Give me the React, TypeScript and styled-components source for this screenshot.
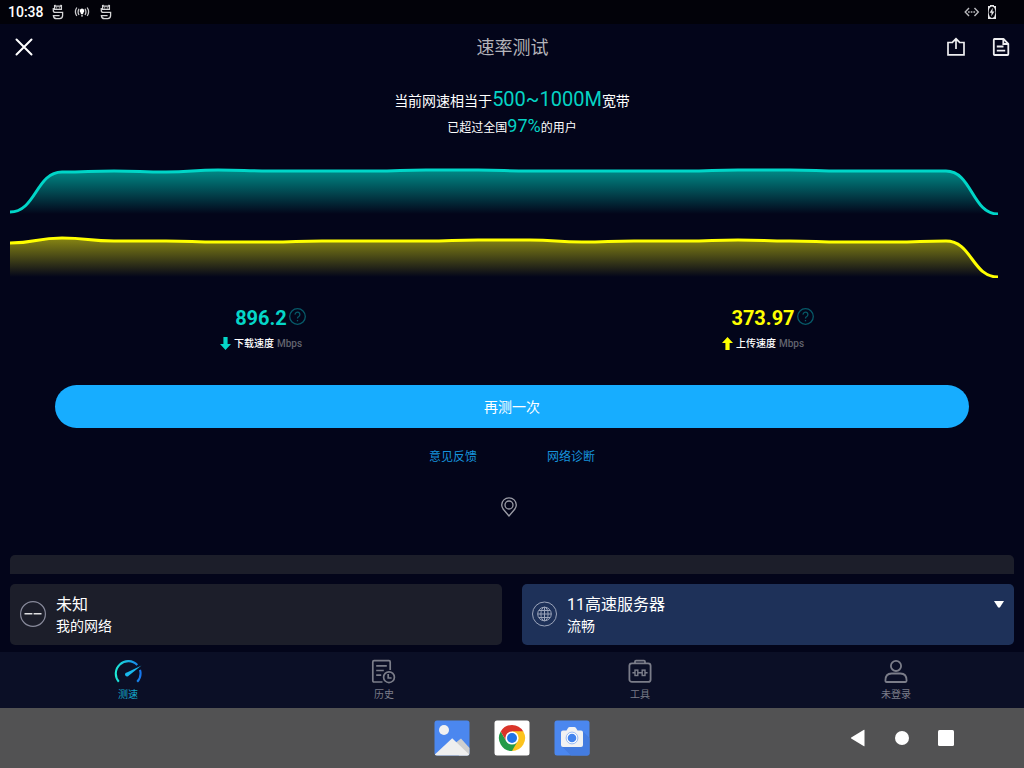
import React from "react";
import styled, { createGlobalStyle } from "styled-components";

const GlobalStyle = createGlobalStyle`
  *, *::before, *::after { box-sizing: border-box; }
  body {
    margin: 0;
    background: #03051a;
    color: #fff;
    font-family: Roboto, "Noto Sans CJK SC", sans-serif;
  }
  button {
    margin: 0;
    padding: 0;
    border: 0;
    background: none;
    color: inherit;
    font: inherit;
    cursor: pointer;
  }
  a { text-decoration: none; }
  h1, p { margin: 0; font-weight: 400; }
  svg { display: block; flex: none; }
`;

const Screen = styled.div`
  display: flex;
  flex-direction: column;
  min-height: 100vh;
`;

const StatusBar = styled.div`
  display: flex;
  align-items: center;
  justify-content: space-between;
  height: 24px;
  padding: 0 28px 0 8px;
  background: #020209;
`;

const StatusGroup = styled.div<{ $gap: number }>`
  display: flex;
  align-items: center;
  gap: ${(p) => p.$gap}px;
`;

const Clock = styled.time`
  font-size: 14px;
  font-weight: 500;
  line-height: 24px;
`;

const Header = styled.header`
  display: grid;
  grid-template-columns: 1fr auto 1fr;
  align-items: center;
  height: 46px;
  padding: 0 11px 0 12px;
`;

const Title = styled.h1`
  padding-top: 2px;
  color: #b4b4ba;
  font-size: 18px;
  line-height: 26px;
`;

const HeaderActions = styled.div`
  display: flex;
  justify-content: flex-end;
  gap: 21px;
`;

const IconButton = styled.button`
  display: grid;
  place-items: center;
  width: 24px;
  height: 24px;
`;

const Main = styled.main`
  display: flex;
  flex: 1;
  flex-direction: column;
  padding: 15px 10px 7px;
`;

const Summary = styled.section`
  display: flex;
  flex-direction: column;
  align-items: center;
`;

const SummaryLine = styled.p<{ $size: number }>`
  font-size: ${(p) => p.$size}px;
  line-height: 28px;
`;

const SummaryDetail = styled(SummaryLine)`
  line-height: 22px;
`;

const Highlight = styled.span<{ $size: number }>`
  color: #05d3c4;
  font-size: ${(p) => p.$size}px;
`;

const Charts = styled.section`
  display: flex;
  flex-direction: column;
  gap: 13px;
  margin-top: 26px;
`;

const ChartSvg = styled.svg`
  width: 100%;
  height: 50px;
`;

const Stats = styled.section`
  display: grid;
  grid-template-columns: 1fr 1fr;
  margin-top: 26px;
`;

const Stat = styled.div`
  display: flex;
  flex-direction: column;
  align-items: center;
`;

const StatValue = styled.div`
  display: grid;
  grid-template-columns: 1fr auto 1fr;
  align-items: center;
  gap: 2px;
  height: 28px;
`;

const StatNumber = styled.strong<{ $color: string }>`
  grid-column: 2;
  color: ${(p) => p.$color};
  font-size: 20px;
  font-weight: 700;
  line-height: 28px;
`;

const HelpButton = styled.button`
  display: grid;
  place-items: start center;
  width: 17px;
  height: 20px;
  color: #075a69;
`;

const StatLabel = styled.div`
  display: flex;
  align-items: center;
  gap: 3px;
  font-size: 10px;
  font-weight: 500;
  line-height: 24px;
`;

const Unit = styled.span`
  color: #62636e;
`;

const RetryButton = styled.button`
  height: 43px;
  margin: 29px 45px 0;
  border-radius: 22px;
  background: #17adff;
  font-size: 14px;
  line-height: 20px;
`;

const Links = styled.nav`
  display: flex;
  justify-content: center;
  gap: 70px;
  margin-top: 19px;
`;

const TextLink = styled.a`
  color: #1693dc;
  font-size: 12px;
  line-height: 20px;
`;

const Location = styled.div`
  display: flex;
  justify-content: center;
  margin-top: 30px;
  padding-right: 6px;
`;

const Banner = styled.div`
  height: 19px;
  margin-top: auto;
  border-radius: 5px 5px 0 0;
  background: #1c1e2a;
`;

const Cards = styled.section`
  display: grid;
  grid-template-columns: 1fr 1fr;
  gap: 20px;
  margin-top: 10px;
`;

const Card = styled.button<{ $active?: boolean }>`
  display: flex;
  align-items: center;
  gap: 10px;
  height: 61px;
  padding: 0 10px 1px;
  border-radius: 5px;
  background: ${(p) => (p.$active ? "#1e3159" : "#1c1e2a")};
  text-align: left;
`;

const CardText = styled.span`
  display: flex;
  flex: 1;
  flex-direction: column;
  padding-top: 2px;
`;

const CardTitle = styled.span`
  font-size: 16px;
  line-height: 22px;
`;

const CardNote = styled.span`
  font-size: 14px;
  line-height: 20px;
`;

const CardArrow = styled.span`
  align-self: flex-start;
  padding-top: 17px;
`;

const TabBar = styled.nav`
  display: grid;
  grid-template-columns: repeat(4, 1fr);
  height: 56px;
  background: #0b0f26;
`;

const Tab = styled.a<{ $active?: boolean }>`
  display: flex;
  flex-direction: column;
  align-items: center;
  padding-top: 5px;
  color: ${(p) => (p.$active ? "#13a5c9" : "#7b7d89")};
  font-size: 10px;
  line-height: 16px;
`;

const SystemBar = styled.footer`
  display: grid;
  grid-template-columns: 1fr auto 1fr;
  align-items: center;
  height: 60px;
  background: #525253;
`;

const Dock = styled.div`
  display: flex;
  grid-column: 2;
  gap: 24px;
`;

const AppButton = styled.button`
  width: 36px;
  height: 36px;
`;

const SystemKeys = styled.div`
  display: flex;
  justify-content: flex-end;
  gap: 20px;
  padding-right: 66px;
`;

const DebugIcon = () => (
  <svg width="12" height="16" viewBox="0 0 12 16" fill="none" stroke="#d6d6d8" strokeWidth="1.3">
    <path d="M2.6 .8 3.6 2.2H8.4L9.4 .8M2.6 1V5.4H9.4V1" />
    <path d="M4.2 3.8H5.2M6.8 3.8H7.8" />
    <path d="M1.3 4V6.4Q1.3 8.4 3.4 8.4H10.6V11.6Q10.6 14.6 7.6 14.6H4.4Q1.6 14.6 1.4 11.6H7.6" />
  </svg>
);

const BroadcastIcon = () => (
  <svg width="16" height="16" viewBox="0 0 16 16" fill="none" stroke="#c8c8cb" strokeWidth="1.3">
    <path d="M2.8 3.5Q0 8 2.8 12M5 4.8Q3.2 8 5 11M13.2 3.5Q16 8 13.2 12M11 4.8Q12.8 8 11 11" />
    <path fill="#fff" stroke="none" d="M8 4.6A2.4 2.4 0 0 1 9.2 9V10.2H6.8V9A2.4 2.4 0 0 1 8 4.6ZM7.2 11.2H8.8V12.6H7.2Z" />
  </svg>
);

const EthernetIcon = () => (
  <svg width="16" height="12" viewBox="0 0 16 12" fill="none" stroke="#b9b9bd" strokeWidth="1.4">
    <path d="M5 2 1.2 6 5 10M10.5 2 14.3 6 10.5 10" />
    <path d="M4 6H11.5" strokeDasharray="1.7 1" />
  </svg>
);

const BatteryIcon = () => (
  <svg width="8" height="14" viewBox="0 0 8 14">
    <path fill="#e6e6e8" d="M2 0H6V1H8V14H0V1H2Z" />
    <ellipse cx="4" cy="7.2" rx="3.4" ry="5.8" fill="#020209" />
    <path fill="#e6e6e8" d="M4.8 2.8 1.6 7.8H3.6L3.2 11.6 6.4 6.6H4.4Z" />
  </svg>
);

const CloseIcon = () => (
  <svg width="18" height="18" viewBox="0 0 18 18" stroke="#fff" strokeWidth="2" strokeLinecap="round">
    <path d="M1.5 1.5 16.5 16.5M16.5 1.5 1.5 16.5" />
  </svg>
);

const ShareIcon = () => (
  <svg width="20" height="20" viewBox="0 0 20 20" fill="none" stroke="#eeeef0" strokeWidth="1.7">
    <path d="M7 5.5H2V17.8H18V5.5H13M10 12V2M6.6 5.2 10 1.8 13.4 5.2" />
  </svg>
);

const DocumentIcon = () => (
  <svg width="18" height="20" viewBox="0 0 18 20" fill="none" stroke="#eeeef0" strokeWidth="1.8">
    <path strokeLinejoin="round" d="M2.3 2H11.5L16.3 6.8V17.2Q16.3 18 15.5 18H2.6Q1.8 18 1.8 17.2V2.8Q1.8 2 2.6 2Z" />
    <path d="M11.3 2V7H16.3M4.8 9.5H11.5M4.8 13.6H13.2" />
  </svg>
);

const HelpIcon = () => (
  <svg width="17" height="17" viewBox="0 0 17 17" fill="none" stroke="currentColor" strokeWidth="1.3">
    <circle cx="8.5" cy="8.5" r="7.8" />
    <path d="M6.1 6.6A2.4 2.4 0 1 1 9.8 8.5Q8.5 9.2 8.5 10.5" />
    <path d="M8.5 12V13.3" />
  </svg>
);

const DirectionIcon = ({ up, color }: { up?: boolean; color: string }) => (
  <svg width="11" height="14" viewBox="0 0 11 14" fill={color}>
    <path d={up ? "M5.5 0 11 6H7.6V13H3.4V6H0Z" : "M3.4 0H7.6V7H11L5.5 13 0 7H3.4Z"} />
  </svg>
);

const PinIcon = () => (
  <svg width="16" height="20" viewBox="0 0 16 20" fill="none" stroke="#9b9ca6" strokeWidth="1.3">
    <path d="M8 19 2.5 12.5Q.7 10.3.7 8A7.3 7.2 0 0 1 15.3 8Q15.3 10.3 13.5 12.5Z" />
    <circle cx="8" cy="8" r="4" />
  </svg>
);

const UnknownIcon = () => (
  <svg width="26" height="26" viewBox="0 0 26 26" fill="none">
    <circle cx="13" cy="13" r="12.4" stroke="#888a9b" strokeWidth="1.2" />
    <path d="M4.5 12.7H12.4M13.6 12.7H21.5" stroke="#e0e0e2" strokeWidth="1.4" />
  </svg>
);

const GlobeIcon = () => (
  <svg width="25" height="26" viewBox="0 0 25 26" fill="none" stroke="#9ba4ba">
    <circle cx="12.5" cy="13" r="12" />
    <circle cx="12.5" cy="13" r="6.8" />
    <ellipse cx="12.5" cy="13" rx="3.6" ry="6.8" />
    <path d="M12.5 6.2V19.8M5.7 13H19.3M7 9.5H18M7 16.5H18" />
  </svg>
);

const GaugeIcon = () => (
  <svg width="30" height="30" viewBox="0 0 30 30" fill="none">
    <defs>
      <linearGradient id="gauge" x1="0" x2="1" y1="0" y2="0">
        <stop offset="0" stopColor="#1ce9d6" />
        <stop offset="1" stopColor="#1677ed" />
      </linearGradient>
    </defs>
    <path
      d="M5.8 24.8A12.5 12.5 0 0 1 24.3 8M27 12.9A12.5 12.5 0 0 1 24.2 24.8"
      stroke="url(#gauge)"
      strokeWidth="2.1"
    />
    <path fill="#19b9ed" d="M28.5 8.5 15.9 18.6A2.1 2.1 0 1 1 13.9 15.4Z" />
  </svg>
);

const HistoryIcon = () => (
  <svg width="28" height="30" viewBox="0 0 28 30" fill="none" stroke="currentColor" strokeWidth="1.7">
    <path d="M12.5 25H4Q2.8 25 2.8 23.8V4.9Q2.8 3.7 4 3.7H19Q20.2 3.7 20.2 4.9V13M6.2 8.8H16.8M6.2 13.5H13.8M6.2 18.2H11.2" />
    <circle cx="19" cy="20.2" r="5.4" />
    <path d="M18.2 17V21H21.6" />
  </svg>
);

const ToolsIcon = () => (
  <svg width="26" height="30" viewBox="0 0 26 30" fill="none" stroke="currentColor" strokeWidth="1.8">
    <rect x="2.4" y="6.3" width="21.2" height="18.6" rx="2.5" />
    <path d="M8 6V4.7Q8 3.7 9 3.7H17Q18 3.7 18 4.7V6" />
    <path d="M5.4 15.8H8M11 15.8H15M18 15.8H20.6" strokeWidth="1.4" />
    <rect x="8" y="13.1" width="2.8" height="5.4" strokeWidth="1.4" />
    <rect x="15.2" y="13.1" width="2.8" height="5.4" strokeWidth="1.4" />
  </svg>
);

const UserIcon = () => (
  <svg width="26" height="30" viewBox="0 0 26 30" fill="none" stroke="currentColor" strokeWidth="1.8">
    <circle cx="13" cy="8.9" r="5.1" />
    <path d="M3.6 25Q2.4 25 2.4 23.5 2.4 16.5 8.5 16.5H17.5Q23.6 16.5 23.6 23.5 23.6 25 22.4 25Z" />
  </svg>
);

const GalleryIcon = () => (
  <svg width="36" height="36" viewBox="0 0 36 36">
    <rect x=".5" y=".5" width="35" height="35" rx="2.5" fill="#4b87ef" />
    <circle cx="10" cy="10" r="5" fill="#f1f1f1" />
    <path fill="#cfcfcf" d="M20 24 27 18.5 35.5 28V33Q35.5 35.5 33 35.5H25Z" />
    <path fill="#efefef" d="M.8 34.5 18.2 18.3 35.2 34.5Q34.5 35.5 33 35.5H3Q1.5 35.5.8 34.5Z" />
  </svg>
);

const ChromeIcon = () => (
  <svg width="36" height="36" viewBox="0 0 36 36">
    <rect x=".5" y=".5" width="35" height="35" rx="2.5" fill="#fff" />
    <path fill="#da3429" d="M6.7 11.5A13 13 0 0 1 29.3 11.5L18 18Z" />
    <path fill="#fcc31e" d="M29.3 11.5A13 13 0 0 1 18 31L18 18V11.5Z" />
    <path fill="#249a48" d="M18 31A13 13 0 0 1 6.7 11.5L12.4 21.3 18 18 23.6 21.3Z" />
    <path fill="#da3429" d="M6.7 11.5 12.4 21.3 18 11.5Z" />
    <path fill="#fcc31e" d="M18 31 23.6 21.3 18 18V11.5H29.3Z" />
    <circle cx="18" cy="18" r="6.6" fill="#fff" />
    <circle cx="18" cy="18" r="5" fill="#2174e6" />
  </svg>
);

const CameraIcon = () => (
  <svg width="36" height="36" viewBox="0 0 36 36">
    <rect x=".5" y=".5" width="35" height="35" rx="2.5" fill="#4b87ef" />
    <path fill="#447ce0" d="M28.5 11 35.5 18V33Q35.5 35.5 33 35.5H17L8 26.5Z" />
    <path fill="#f2f2f2" d="M9 10.5H12.5L14 8Q14.6 7 15.7 7H20.3Q21.4 7 22 8L23.5 10.5H27Q29 10.5 29 12.5V25Q29 27 27 27H9Q7 27 7 25V12.5Q7 10.5 9 10.5Z" />
    <circle cx="18" cy="18" r="5.9" fill="#fff" stroke="#7fa9f2" strokeWidth=".8" />
    <circle cx="18" cy="18" r="4.3" fill="#4384ee" />
  </svg>
);

interface SpeedChartProps {
  id: string;
  label: string;
  color: string;
  fill: string;
  values: number[];
}

const STEP = 52;

function SpeedChart({ id, label, color, fill, values }: SpeedChartProps) {
  const line = values
    .map((y, i) => {
      const x = i * STEP;
      if (i === 0) return `M0 ${y}`;
      const mid = x - STEP / 2;
      return `C${mid} ${values[i - 1]} ${mid} ${y} ${x} ${y}`;
    })
    .join("");
  return (
    <ChartSvg viewBox="0 0 1004 50" preserveAspectRatio="none" role="img" aria-label={label}>
      <defs>
        <linearGradient id={id} gradientUnits="userSpaceOnUse" x1="0" y1="5" x2="0" y2="49">
          <stop offset="0" stopColor={fill} />
          <stop offset="1" stopColor={fill} stopOpacity="0" />
        </linearGradient>
      </defs>
      <path d={`${line}V50H0Z`} fill={`url(#${id})`} />
      <path d={line} fill="none" stroke={color} strokeWidth="3" vectorEffect="non-scaling-stroke" />
    </ChartSvg>
  );
}

const downloadValues = [47, 7, 6, 7, 5, 6, 6, 6, 5, 5, 6, 6, 6, 6, 5, 5, 6, 6, 6, 49];
const uploadValues = [15, 10, 13, 13, 14, 14, 13, 13, 13, 12, 12, 14, 13, 13, 12, 13, 14, 14, 13, 49];

const tabs = [
  { label: "测速", icon: <GaugeIcon />, active: true },
  { label: "历史", icon: <HistoryIcon /> },
  { label: "工具", icon: <ToolsIcon /> },
  { label: "未登录", icon: <UserIcon /> },
];

interface SpeedStatProps {
  value: string;
  label: string;
  color: string;
  up?: boolean;
}

function SpeedStat({ value, label, color, up }: SpeedStatProps) {
  return (
    <Stat>
      <StatValue>
        <StatNumber $color={color}>{value}</StatNumber>
        <HelpButton aria-label={`${label}说明`}>
          <HelpIcon />
        </HelpButton>
      </StatValue>
      <StatLabel>
        <DirectionIcon up={up} color={color} />
        <span>{label}</span>
        <Unit>Mbps</Unit>
      </StatLabel>
    </Stat>
  );
}

export default function App() {
  return (
    <Screen>
      <GlobalStyle />
      <StatusBar>
        <StatusGroup $gap={8}>
          <Clock>10:38</Clock>
          <StatusGroup $gap={10}>
            <DebugIcon />
            <BroadcastIcon />
            <DebugIcon />
          </StatusGroup>
        </StatusGroup>
        <StatusGroup $gap={8}>
          <EthernetIcon />
          <BatteryIcon />
        </StatusGroup>
      </StatusBar>

      <Header>
        <IconButton aria-label="关闭"><CloseIcon /></IconButton>
        <Title>速率测试</Title>
        <HeaderActions>
          <IconButton aria-label="分享"><ShareIcon /></IconButton>
          <IconButton aria-label="报告"><DocumentIcon /></IconButton>
        </HeaderActions>
      </Header>

      <Main>
        <Summary>
          <SummaryLine $size={14}>
            当前网速相当于<Highlight $size={20}>500~1000M</Highlight>宽带
          </SummaryLine>
          <SummaryDetail $size={12}>
            已超过全国<Highlight $size={18}>97%</Highlight>的用户
          </SummaryDetail>
        </Summary>

        <Charts>
          <SpeedChart id="download" label="下载速度曲线" color="#00d6c8" fill="#008b88" values={downloadValues} />
          <SpeedChart id="upload" label="上传速度曲线" color="#ffff00" fill="#9a9812" values={uploadValues} />
        </Charts>

        <Stats>
          <SpeedStat value="896.2" label="下载速度" color="#05d6c8" />
          <SpeedStat value="373.97" label="上传速度" color="#ffff00" up />
        </Stats>

        <RetryButton>再测一次</RetryButton>

        <Links>
          <TextLink href="#feedback">意见反馈</TextLink>
          <TextLink href="#diagnosis">网络诊断</TextLink>
        </Links>

        <Location><PinIcon /></Location>

        <Banner />
        <Cards>
          <Card>
            <UnknownIcon />
            <CardText>
              <CardTitle>未知</CardTitle>
              <CardNote>我的网络</CardNote>
            </CardText>
          </Card>
          <Card $active>
            <GlobeIcon />
            <CardText>
              <CardTitle>11高速服务器</CardTitle>
              <CardNote>流畅</CardNote>
            </CardText>
            <CardArrow>
              <svg width="10" height="7" viewBox="0 0 10 7" fill="#fff">
                <path d="M0 0H10L6 6.3Q5 7 4 6.3Z" />
              </svg>
            </CardArrow>
          </Card>
        </Cards>
      </Main>

      <TabBar>
        {tabs.map((tab) => (
          <Tab key={tab.label} href="#" $active={tab.active}>
            {tab.icon}
            {tab.label}
          </Tab>
        ))}
      </TabBar>

      <SystemBar>
        <Dock>
          <AppButton aria-label="图库"><GalleryIcon /></AppButton>
          <AppButton aria-label="Chrome"><ChromeIcon /></AppButton>
          <AppButton aria-label="相机"><CameraIcon /></AppButton>
        </Dock>
        <SystemKeys>
          <IconButton aria-label="返回">
            <svg width="16" height="18" viewBox="0 0 16 18" fill="#fff">
              <path d="M14.5 1V17Q14.5 17.5 14 17.2L1.2 9.6Q.5 9 1.2 8.4L14 .8Q14.5.5 14.5 1Z" />
            </svg>
          </IconButton>
          <IconButton aria-label="主页">
            <svg width="14" height="14" viewBox="0 0 14 14" fill="#fff">
              <circle cx="7" cy="7" r="7" />
            </svg>
          </IconButton>
          <IconButton aria-label="最近任务">
            <svg width="16" height="16" viewBox="0 0 16 16" fill="#fff">
              <rect width="16" height="16" rx="1.5" />
            </svg>
          </IconButton>
        </SystemKeys>
      </SystemBar>
    </Screen>
  );
}
